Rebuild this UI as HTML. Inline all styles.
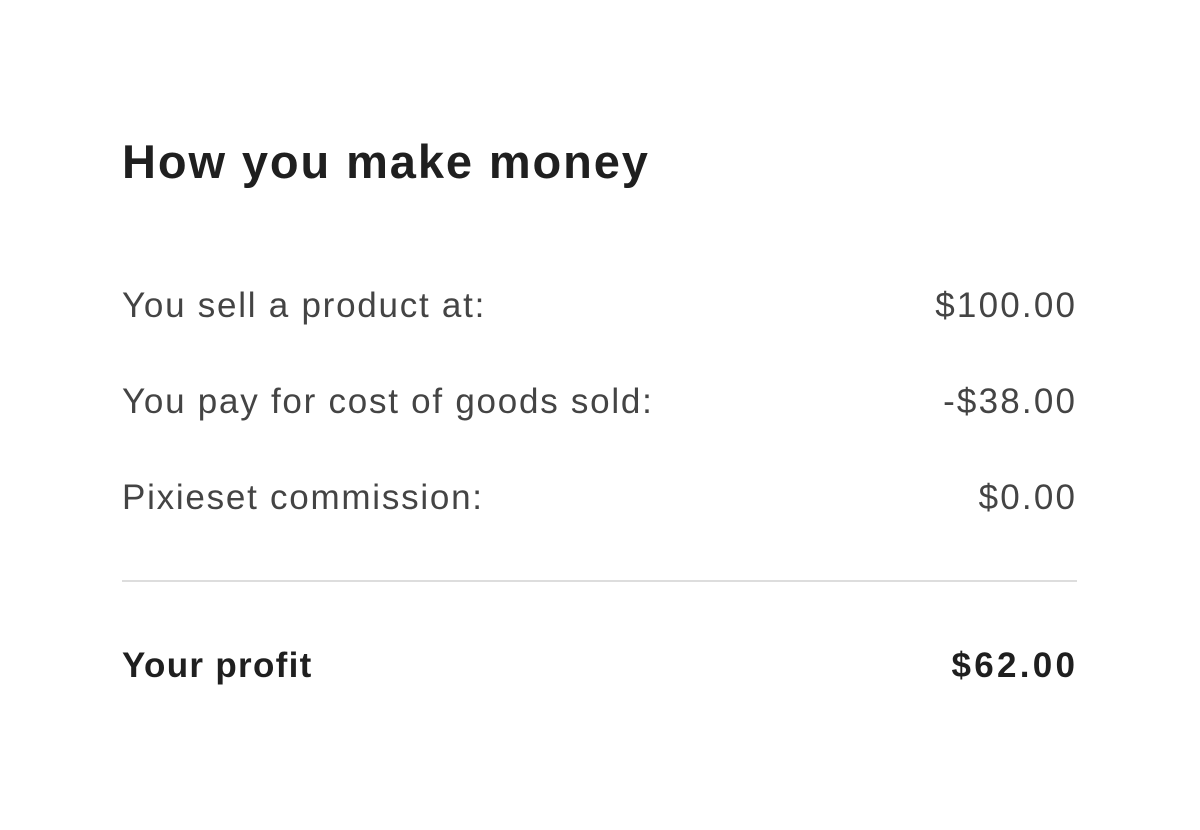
<!DOCTYPE html>
<html><head><style>
html,body{margin:0;padding:0;background:#fff;width:1200px;height:830px;overflow:hidden;font-family:"Liberation Sans",sans-serif;}
h1{position:absolute;left:122px;top:132px;margin:0;font-size:47px;font-weight:bold;color:#1f1f1f;letter-spacing:1.9px;line-height:60px;}
.row{position:absolute;left:122px;width:954px;display:flex;justify-content:space-between;font-size:35px;color:#444;line-height:44px;letter-spacing:1.75px;}
.row span:last-child{letter-spacing:2.2px;margin-right:-1.2px;}
.line{position:absolute;left:122px;width:955px;top:580px;height:2px;background:#ddd;}
.b{font-weight:bold;color:#1f1f1f;letter-spacing:1.3px;}
.row.b span:last-child{letter-spacing:3.3px;margin-right:-2.3px;}
</style></head><body>
<h1>How you make money</h1>
<div class="row" style="top:284px"><span>You sell a product at:</span><span>$100.00</span></div>
<div class="row" style="top:380px"><span>You pay for cost of goods sold:</span><span>-$38.00</span></div>
<div class="row" style="top:476px"><span>Pixieset commission:</span><span>$0.00</span></div>
<div class="line"></div>
<div class="row b" style="top:644px"><span>Your profit</span><span>$62.00</span></div>
</body></html>
